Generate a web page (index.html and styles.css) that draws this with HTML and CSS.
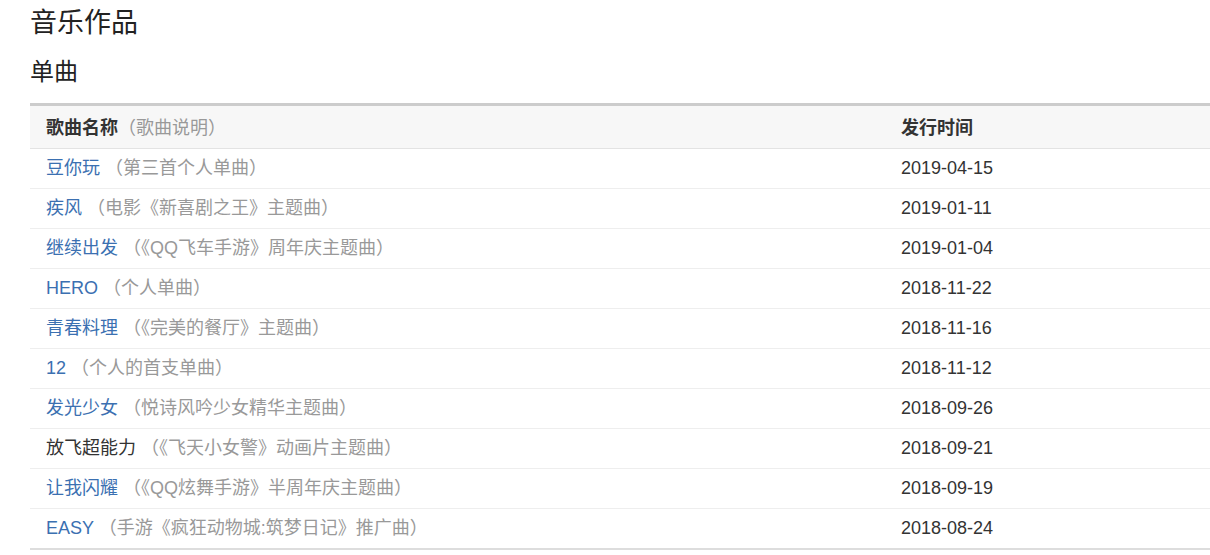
FILE: index.html
```html
<!DOCTYPE html>
<html lang="zh-CN">
<head>
    <meta charset="UTF-8">
    <title>音乐作品</title>
    <link rel="stylesheet" href="styles.css">
</head>
<body>
    <div class="works">
        <h1>音乐作品</h1>
        <h2>单曲</h2>

        <!-- 单曲列表 -->
        <table class="song-table">
            <thead>
                <tr>
                    <th class="col-name"><b>歌曲名称</b><span class="note">（歌曲说明）</span></th>
                    <th class="col-date"><b>发行时间</b></th>
                </tr>
            </thead>
            <tbody>
                <tr><td><a href="#">豆你玩</a> <span class="note">（第三首个人单曲）</span></td><td>2019-04-15</td></tr>
                <tr><td><a href="#">疾风</a> <span class="note">（电影《新喜剧之王》主题曲）</span></td><td>2019-01-11</td></tr>
                <tr><td><a href="#">继续出发</a> <span class="note">（《QQ飞车手游》周年庆主题曲）</span></td><td>2019-01-04</td></tr>
                <tr><td><a href="#">HERO</a> <span class="note">（个人单曲）</span></td><td>2018-11-22</td></tr>
                <tr><td><a href="#">青春料理</a> <span class="note">（《完美的餐厅》主题曲）</span></td><td>2018-11-16</td></tr>
                <tr><td><a href="#">12</a> <span class="note">（个人的首支单曲）</span></td><td>2018-11-12</td></tr>
                <tr><td><a href="#">发光少女</a> <span class="note">（悦诗风吟少女精华主题曲）</span></td><td>2018-09-26</td></tr>
                <tr><td>放飞超能力 <span class="note">（《飞天小女警》动画片主题曲）</span></td><td>2018-09-21</td></tr>
                <tr><td><a href="#">让我闪耀</a> <span class="note">（《QQ炫舞手游》半周年庆主题曲）</span></td><td>2018-09-19</td></tr>
                <tr><td><a href="#">EASY</a> <span class="note">（手游《疯狂动物城:筑梦日记》推广曲）</span></td><td>2018-08-24</td></tr>
            </tbody>
        </table>
    </div>
</body>
</html>
```

FILE: styles.css
```css
/* 基本设置 */
body { margin: 0; background: #fff; color: #333; font-family: "Liberation Sans", "Noto Sans CJK SC", sans-serif; font-size: 18px; }
.works { padding: 0 0 0 30px; }

/* 标题 */
h1 { font-size: 27px; font-weight: normal; line-height: 32px; margin: 7px 0 0; color: #222; }
h2 { font-size: 24px; font-weight: normal; line-height: 30px; margin: 18px 0 0; color: #222; }

/* 表格 */
.song-table { width: 100%; border-collapse: collapse; margin-top: 16px; border-top: 3px solid #ccc; border-bottom: 2px solid #ddd; }
.song-table th { background: #f7f7f7; text-align: left; font-weight: normal; padding: 8px 16px; line-height: 24px; border-bottom: 1px solid #e3e3e3; }
.song-table th b { font-family: "Noto Sans CJK SC", serif; font-weight: bold; color: #333; }
.song-table td { padding: 8px 16px; line-height: 23px; border-top: 1px solid #eee; color: #333; }
.song-table tbody tr:first-child td { border-top: none; }
.col-date { width: 293px; }
.song-table a { color: #3b70b1; text-decoration: none; }
.note { color: #999; }
```
